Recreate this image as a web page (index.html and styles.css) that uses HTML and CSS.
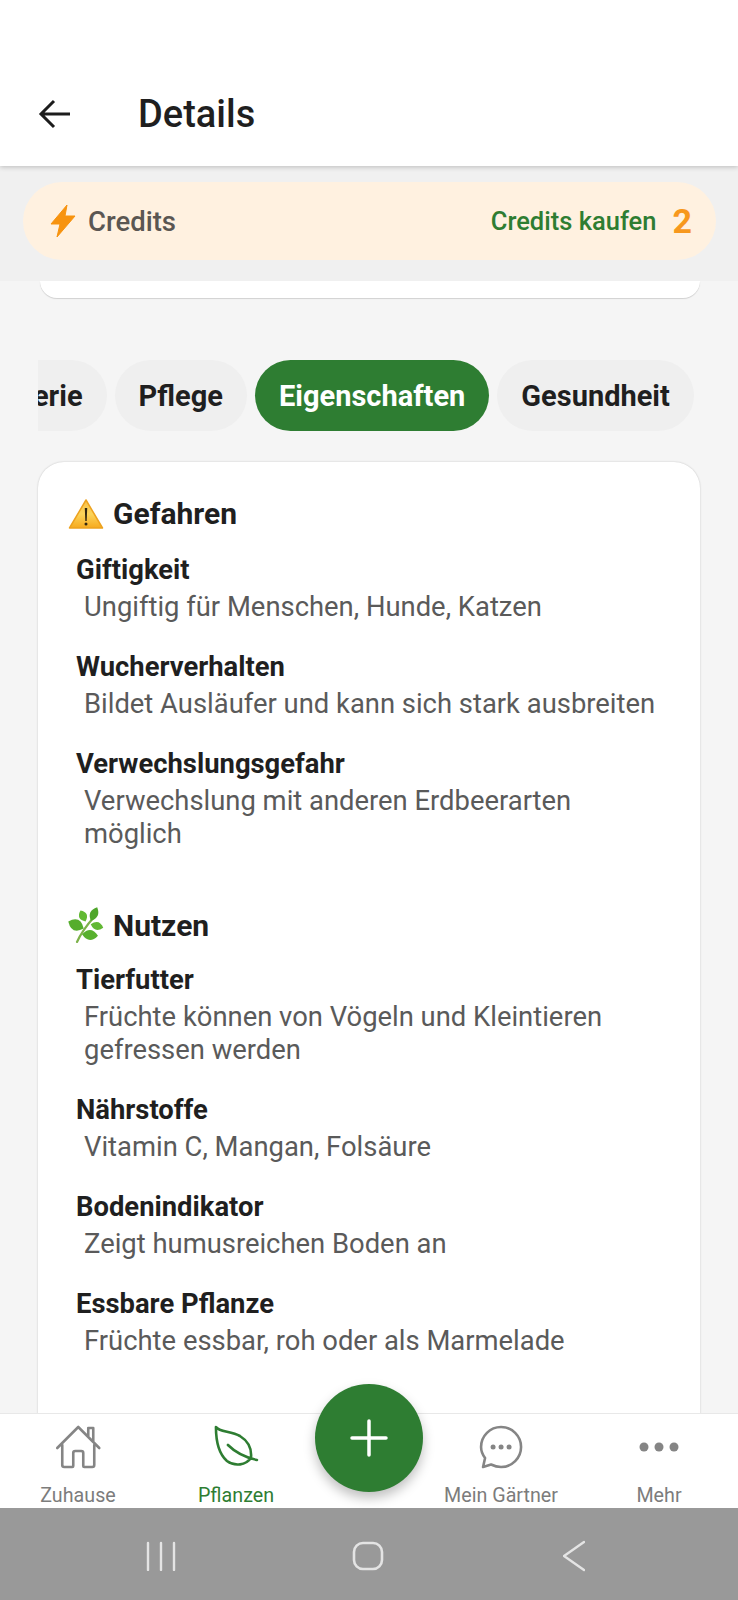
FILE: index.html
```html
<!DOCTYPE html>
<html lang="de">
<head>
    <meta charset="UTF-8">
    <meta name="viewport" content="width=device-width, initial-scale=1.0">
    <title>Details</title>
    <link rel="stylesheet" href="styles.css">
</head>
<body>
    <div class="screen">
        <header class="app-header">
            <svg class="back-icon" viewBox="0 0 34 34" width="34" height="34">
                <path d="M32 17H3M16 4L3 17l13 13" fill="none" stroke="#1c1c1c" stroke-width="3"/>
            </svg>
            <h1 class="title">Details</h1>
        </header>

        <div class="credits-wrap">
            <div class="credits">
                <svg class="bolt" viewBox="0 0 26 34" width="26" height="34">
                    <path d="M17 1L1 20h9L7 33l18-21h-10z" fill="#f7930f" stroke="#f7930f" stroke-width="1" stroke-linejoin="round"/>
                </svg>
                <span class="credits-label">Credits</span>
                <span class="credits-buy">Credits kaufen</span>
                <span class="credits-count">2</span>
            </div>
        </div>

        <main class="content">
            <div class="card-end"></div>

            <div class="tabs">
                <div class="tab tab-cut">Galerie</div>
                <div class="tab">Pflege</div>
                <div class="tab active">Eigenschaften</div>
                <div class="tab">Gesundheit</div>
            </div>

            <section class="card">
                <h2 class="heading">
                    <svg class="emoji" viewBox="0 0 36 32" width="36" height="32">
                        <defs>
                            <linearGradient id="warn" x1="0" y1="0" x2="0" y2="1">
                                <stop offset="0" stop-color="#f8c04a"/>
                                <stop offset="0.5" stop-color="#fcd45a"/>
                                <stop offset="1" stop-color="#f6aa1e"/>
                            </linearGradient>
                        </defs>
                        <path d="M18 2L34.500 30H1.500z" fill="url(#warn)" stroke="#eda21f" stroke-width="1.500" stroke-linejoin="round"/>
                        <path d="M16.800 10h2.400l-.5 13h-1.400z" fill="#33270f"/>
                        <circle cx="18" cy="26" r="1.500" fill="#33270f"/>
                    </svg>
                    Gefahren
                </h2>
                <div class="item">
                    <div class="item-name">Giftigkeit</div>
                    <div class="item-text">Ungiftig für Menschen, Hunde, Katzen</div>
                </div>
                <div class="item">
                    <div class="item-name">Wucherverhalten</div>
                    <div class="item-text">Bildet Ausläufer und kann sich stark ausbreiten</div>
                </div>
                <div class="item">
                    <div class="item-name">Verwechslungsgefahr</div>
                    <div class="item-text">Verwechslung mit anderen Erdbeerarten möglich</div>
                </div>

                <h2 class="heading heading-second">
                    <svg class="emoji" viewBox="0 0 36 36" width="36" height="36">
                        <path d="M9 35C13 26 19 18 26 10" fill="none" stroke="#7db24a" stroke-width="2.200" stroke-linecap="round"/>
                        <path d="M-8.500 0Q0 -11 8.500 0Q0 11 -8.500 0z" transform="translate(8 18) rotate(25)" fill="#55ad2c"/>
                        <path d="M-6 0Q0 -8 6 0Q0 8 -6 0z" transform="translate(15 9) rotate(65)" fill="#62b934"/>
                        <path d="M-7.500 0Q0 -8 7.500 0Q0 8 -7.500 0z" transform="translate(26 7) rotate(-65)" fill="#4fa62b"/>
                        <path d="M-6.500 0Q0 -8 6.500 0Q0 8 -6.500 0z" transform="translate(29 19) rotate(15)" fill="#62b834"/>
                        <path d="M-8 0Q0 -10 8 0Q0 10 -8 0z" transform="translate(22 28) rotate(5)" fill="#58b02f"/>
                    </svg>
                    Nutzen
                </h2>
                <div class="item">
                    <div class="item-name">Tierfutter</div>
                    <div class="item-text">Früchte können von Vögeln und Kleintieren gefressen werden</div>
                </div>
                <div class="item">
                    <div class="item-name">Nährstoffe</div>
                    <div class="item-text">Vitamin C, Mangan, Folsäure</div>
                </div>
                <div class="item">
                    <div class="item-name">Bodenindikator</div>
                    <div class="item-text">Zeigt humusreichen Boden an</div>
                </div>
                <div class="item">
                    <div class="item-name">Essbare Pflanze</div>
                    <div class="item-text">Früchte essbar, roh oder als Marmelade</div>
                </div>
            </section>
        </main>

        <nav class="bottom-nav">
            <div class="nav-item nav-home">
                <svg viewBox="0 0 46 46" width="46" height="46">
                    <path d="M2 24L23 3l21 21M7 21v20q0 2 2 2h8q1 0 1-1V29q0-2 2-2h6q2 0 2 2v13q0 1 1 1h8q2 0 2-2V21M33 12V4h5v14" fill="none" stroke="#858585" stroke-width="2.600" stroke-linejoin="round" stroke-linecap="round"/>
                </svg>
                <span>Zuhause</span>
            </div>
            <div class="nav-item nav-plants active">
                <svg viewBox="0 0 46 46" width="46" height="46">
                    <path d="M3 3C6 8 18 7 27 12c8 5 12 13 11 22-5 7-16 9-24 3C6 30 3 16 3 3zM15 21q11 11 29 15" fill="none" stroke="#2e7d32" stroke-width="2.600" stroke-linejoin="round" stroke-linecap="round"/>
                </svg>
                <span>Pflanzen</span>
            </div>
            <div class="nav-item nav-chat">
                <svg viewBox="0 0 46 46" width="46" height="46">
                    <path d="M5 43l2-9C4 30 3 26 3 23 3 12 12 3 23 3s20 9 20 20-9 20-20 20c-4 0-7-1-10-2.500z" fill="none" stroke="#858585" stroke-width="2.600" stroke-linejoin="round"/>
                    <circle cx="15" cy="23" r="2.500" fill="#858585"/>
                    <circle cx="23" cy="23" r="2.500" fill="#858585"/>
                    <circle cx="31" cy="23" r="2.500" fill="#858585"/>
                </svg>
                <span>Mein Gärtner</span>
            </div>
            <div class="nav-item nav-more">
                <svg viewBox="0 0 46 46" width="46" height="46">
                    <circle cx="8" cy="23" r="4.500" fill="#858585"/>
                    <circle cx="23" cy="23" r="4.500" fill="#858585"/>
                    <circle cx="38" cy="23" r="4.500" fill="#858585"/>
                </svg>
                <span>Mehr</span>
            </div>
            <div class="fab">
                <svg viewBox="0 0 40 40" width="40" height="40">
                    <path d="M20 3v34M3 20h34" stroke="#fff" stroke-width="3.500" stroke-linecap="round"/>
                </svg>
            </div>
        </nav>

        <div class="system-bar">
            <svg viewBox="0 0 30 30" width="30" height="30">
                <path d="M2 2v27M15 2v27M28 2v27" stroke="#e4e4e4" stroke-width="2.400" stroke-linecap="round"/>
            </svg>
            <svg viewBox="0 0 32 32" width="32" height="32">
                <rect x="2" y="3" width="28" height="26" rx="9" fill="none" stroke="#e4e4e4" stroke-width="2.600"/>
            </svg>
            <svg class="sys-back" viewBox="0 0 22 32" width="22" height="32">
                <path d="M21 2L1 16l20 14" fill="none" stroke="#e4e4e4" stroke-width="2.400" stroke-linecap="round"/>
            </svg>
        </div>
    </div>
</body>
</html>
```

FILE: styles.css
```css
body {
    margin: 0;
    font-family: Roboto, "Noto Sans", sans-serif;
    color: #1f1f1f;
    background-color: #f5f5f5;
}

.screen {
    height: 1600px;
    display: flex;
    flex-direction: column;
    overflow: hidden;
}

.app-header {
    height: 166px;
    flex: none;
    box-sizing: border-box;
    padding: 62px 0 0 38px;
    display: flex;
    align-items: center;
    background-color: #fff;
    box-shadow: 0 1px 5px rgba(0, 0, 0, 0.22);
    position: relative;
    z-index: 2;
}

.title {
    margin: 0 0 0 66px;
    font-size: 38px;
    font-weight: 500;
}

.credits-wrap {
    flex: none;
    height: 115px;
    box-sizing: border-box;
    padding: 16px 22px 0 23px;
    background-color: #f0f0f0;
}

.credits {
    height: 78px;
    box-sizing: border-box;
    padding: 0 24px 0 27px;
    display: flex;
    align-items: center;
    border-radius: 39px;
    background-color: #fff1e0;
}

.credits-label {
    margin-left: 12px;
    font-size: 27.500px;
    font-weight: 500;
    color: #5a5652;
}

.credits-buy {
    margin-left: auto;
    font-size: 25.500px;
    font-weight: 500;
    color: #2e7d32;
}

.credits-count {
    margin-left: 16px;
    font-size: 34px;
    font-weight: 700;
    color: #f7981d;
}

.content {
    flex: 1;
    min-height: 0;
    overflow: hidden;
    background-color: #f5f5f5;
}

.card-end {
    height: 17px;
    margin: 0 38px 0 40px;
    background-color: #fff;
    border-radius: 0 0 26px 26px;
    box-shadow: 0 1px 1px rgba(0, 0, 0, 0.15);
}

.tabs {
    margin: 62px 38px 0 38px;
    display: flex;
    gap: 8px;
    overflow: hidden;
}

.tab {
    flex: none;
    height: 71px;
    padding: 0 24px;
    display: flex;
    align-items: center;
    border-radius: 36px;
    background-color: #efefef;
    font-size: 29px;
    font-weight: 700;
}

.tab-cut {
    margin-left: -72px;
}

.tab.active {
    background-color: #2e7d32;
    color: #fff;
}

.card {
    margin: 31px 38px 0 38px;
    padding: 29.500px 30px 120px 30px;
    background-color: #fff;
    border-radius: 26px;
    box-shadow: 0 0 2px rgba(0, 0, 0, 0.22);
}

.heading {
    margin: 0;
    display: flex;
    align-items: center;
    gap: 9px;
    height: 44px;
    font-size: 30px;
    font-weight: 700;
}

.heading-second {
    margin-top: 41px;
}

.emoji {
    flex: none;
}

.item {
    margin: 14px 0 0 8px;
    padding-bottom: 10.600px;
}

.heading + .item {
    margin-top: 16.500px;
}

.heading-second + .item {
    margin-top: 14.500px;
}

.item-name {
    font-size: 27.400px;
    font-weight: 700;
    line-height: 36px;
}

.item-text {
    margin: 3px 0 0 8px;
    font-size: 27.400px;
    line-height: 33.400px;
    color: #5a5a5a;
}

.bottom-nav {
    flex: none;
    height: 95px;
    display: flex;
    position: relative;
    z-index: 2;
    background-color: #fff;
    border-top: 1px solid #e8e8e8;
    box-sizing: border-box;
}

.nav-item {
    position: absolute;
    top: 10px;
    transform: translateX(-50%);
    display: flex;
    flex-direction: column;
    align-items: center;
    white-space: nowrap;
    font-size: 19.700px;
    color: #7c7c7c;
    gap: 14px;
}

.nav-home { left: 78px; }
.nav-plants { left: 236px; }
.nav-chat { left: 501px; }
.nav-more { left: 659px; }

.nav-item.active {
    color: #2e7d32;
}

.fab {
    position: absolute;
    left: 315px;
    top: -30px;
    width: 108px;
    height: 108px;
    border-radius: 50%;
    display: flex;
    align-items: center;
    justify-content: center;
    background-color: #2e7d32;
    box-shadow: 0 6px 12px rgba(0, 0, 0, 0.25);
}

.system-bar {
    flex: none;
    height: 92px;
    box-sizing: border-box;
    padding: 4px 0 0 146px;
    display: flex;
    align-items: center;
    gap: 176px;
    background-color: #999;
}

.sys-back {
    margin-left: 3px;
}
```
